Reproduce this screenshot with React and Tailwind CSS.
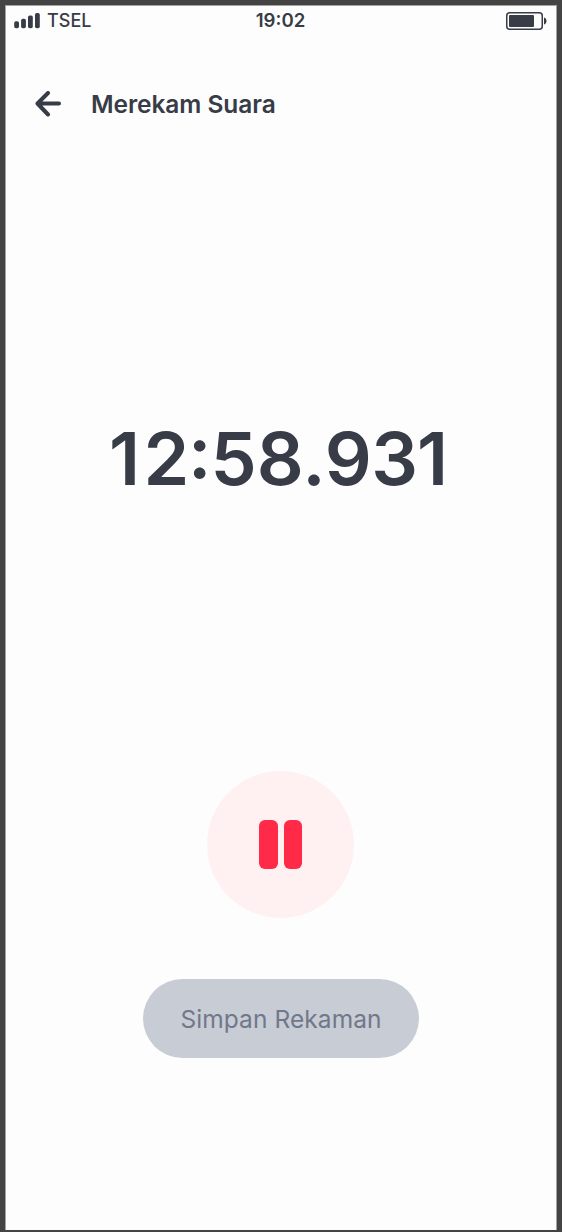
const SignalIcon = () => (
  <svg width="26" height="16" viewBox="0 0 26 16" fill="currentColor">
    <rect x="0.2" y="8.3" width="4.8" height="7" rx="1.8" />
    <rect x="7.1" y="5.8" width="4.8" height="9.5" rx="1.8" />
    <rect x="14" y="2.5" width="4.8" height="12.8" rx="1.8" />
    <rect x="21" y="0" width="4.8" height="15.3" rx="1.8" />
  </svg>
);

const BatteryIcon = () => (
  <svg width="41" height="18" viewBox="0 0 41 18" fill="currentColor">
    <rect x="0.75" y="0.75" width="35.5" height="16.5" rx="3" fill="none" stroke="currentColor" strokeWidth="1.5" />
    <rect x="3" y="3" width="25" height="12" rx="1" />
    <path d="M38 5.5c1.6.5 2.5 1.8 2.5 3.5s-.9 3-2.5 3.5z" />
  </svg>
);

const BackIcon = () => (
  <svg width="26" height="26" viewBox="0 0 26 26" fill="none" stroke="currentColor" strokeWidth="4" strokeLinecap="round" strokeLinejoin="round">
    <path d="M13 2 2.5 12.5 13 23.5M3 12.5h21" />
  </svg>
);

const StatusBar = () => (
  <div className="grid grid-cols-3 items-center h-[30px] pl-2 pr-[9px]">
    <div className="flex items-center gap-[7px]">
      <SignalIcon />
      <span className="text-[18px] leading-none font-medium">TSEL</span>
    </div>
    <span className="text-center text-[18.6px] leading-none font-semibold pb-0.5">19:02</span>
    <div className="flex justify-end"><BatteryIcon /></div>
  </div>
);

// Digits are spaced by hand, the colon sits centred on them
const Timer = () => (
  <div className="text-[73.5px] leading-none font-semibold whitespace-nowrap">
    <span className="mr-[3.4px]">1</span>
    <span className="mr-[-1.2px]">2</span>
    <span className="relative top-[-7.5px] mr-[-1px] [font-feature-settings:'calt'_0]">:</span>
    <span className="mr-[-1.6px]">58</span>
    <span className="mr-[-0.6px]">.9</span>
    <span className="mr-[-1px]">3</span>
    <span>1</span>
  </div>
);

const App = () => {
  return (
    <div className="h-[1232px] w-[562px] bg-[#444444] pt-[5px] pb-[2px] px-[5px]">
      <main className="h-full flex flex-col bg-[#fdfdfd] text-[#383c47] font-['Inter',sans-serif] border-t border-x border-[#a3a3a3]">
        <StatusBar />
        <header className="flex items-center h-[34px] mt-[51px] pl-[29px] gap-[30px]">
          <button aria-label="Kembali"><BackIcon /></button>
          <h1 className="text-[24.5px] leading-none font-semibold tracking-[-0.07px]">Merekam Suara</h1>
        </header>
        <div className="mt-[288px] h-[100px] pl-[103px] flex items-center">
          <Timer />
        </div>
        <div className="mt-[262px] flex flex-col items-center gap-[61px]">
          <button aria-label="Jeda" className="w-[147px] h-[147px] rounded-full bg-[#fff1f2] flex items-center justify-center gap-[6px] mr-px">
            <span className="w-[18.5px] h-[49px] rounded-[6px] bg-[#ff2948]" />
            <span className="w-[18.5px] h-[49px] rounded-[6px] bg-[#ff2948]" />
          </button>
          <button className="w-[276px] h-[79px] pt-[2px] rounded-full bg-[#c8ccd5] text-[#71788a] text-[24.5px] leading-none tracking-[0.08px]">
            Simpan Rekaman
          </button>
        </div>
      </main>
    </div>
  );
};
export default App;
